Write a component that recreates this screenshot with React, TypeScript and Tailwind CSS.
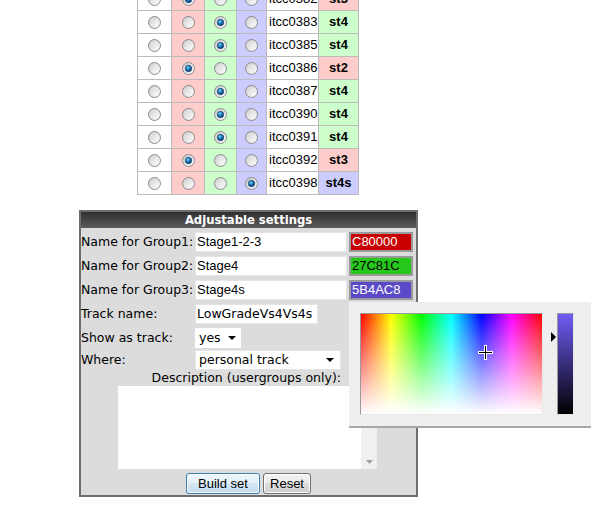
import React from "react";

type Row = [string, number, string];
const rows: Row[] = [
  ["itcc0382", 1, "st3"],
  ["itcc0383", 2, "st4"],
  ["itcc0385", 2, "st4"],
  ["itcc0386", 1, "st2"],
  ["itcc0387", 2, "st4"],
  ["itcc0390", 2, "st4"],
  ["itcc0391", 2, "st4"],
  ["itcc0392", 1, "st3"],
  ["itcc0398", 3, "st4s"],
];

function Radio({ checked }: { checked: boolean }) {
  return (
    <svg width="13" height="13" viewBox="0 0 13 13">
      <defs>
        <linearGradient id="rbg" x1="0" y1="0" x2="1" y2="1">
          <stop offset="0" stopColor="#c8c8c8" />
          <stop offset="1" stopColor="#ffffff" />
        </linearGradient>
        <linearGradient id="rin" x1="0" y1="0" x2="1" y2="1">
          <stop offset="0" stopColor="#d6d6d6" />
          <stop offset="1" stopColor="#fafafa" />
        </linearGradient>
        <radialGradient id="rdot" cx="0.4" cy="0.35" r="0.7">
          <stop offset="0" stopColor="#7fd4ff" />
          <stop offset="0.45" stopColor="#1f7fc4" />
          <stop offset="1" stopColor="#0a2f5a" />
        </radialGradient>
      </defs>
      <circle cx="6.5" cy="6.5" r="6" fill="url(#rbg)" stroke="#8c8c8c" strokeWidth="1" />
      <circle cx="6.5" cy="6.5" r="4" fill="url(#rin)" />
      {checked && <circle cx="6.5" cy="6.5" r="3.2" fill="url(#rdot)" stroke="#0b3358" strokeWidth="0.6" />}
    </svg>
  );
}

function Arrow() {
  return (
    <svg width="8" height="4" viewBox="0 0 8 4">
      <polygon points="0,0 8,0 4,4" fill="#000" />
    </svg>
  );
}

const statusBg = (s: string) =>
  s === "st4" ? "bg-[#ccffcc]" : s === "st4s" ? "bg-[#ccccff]" : "bg-[#ffcccc]";

export default function App() {
  const verd = { fontFamily: '"DejaVu Sans", Verdana, sans-serif' };
  const arial = { fontFamily: '"Liberation Sans", Arial, sans-serif' };
  return (
    <div className="relative w-[611px] h-[507px] overflow-hidden bg-white" style={arial}>
      {/* Table */}
      <div className="grid grid-cols-[33px_32px_31px_29px_51px_39px] auto-rows-[22px] gap-px bg-[#bbbbbb] p-px w-fit ml-[137px] mt-[-13px] text-[13px] text-black">
        {rows.map(([name, sel, st]) => (
          <React.Fragment key={name}>
            <div className="bg-white flex items-center justify-center"><Radio checked={sel === 0} /></div>
            <div className="bg-[#ffcccc] flex items-center justify-center"><Radio checked={sel === 1} /></div>
            <div className="bg-[#ccffcc] flex items-center justify-center"><Radio checked={sel === 2} /></div>
            <div className="bg-[#ccccff] flex items-center justify-center"><Radio checked={sel === 3} /></div>
            <div className="bg-white flex items-center pl-[2px]">{name}</div>
            <div className={`${statusBg(st)} flex items-center justify-center font-bold`}>{st}</div>
          </React.Fragment>
        ))}
      </div>

      {/* Panel */}
      <div className="ml-[79px] mt-[15px] w-[339px] border-2 border-[#6e6e6e] bg-[#dcdcdc] text-[12.5px] text-black flex flex-col" style={verd}>
        <div className="h-[16px] bg-[linear-gradient(to_bottom,#2f2f2f,#5c5c5c)] text-white font-bold text-center leading-[16px] text-[11.6px]">
          Adjustable settings
        </div>
        <div className="flex flex-col mt-[4px] gap-[4px]">
          {[
            ["Name for Group1:", "Stage1-2-3", "C80000", "bg-[#c80000] text-white"],
            ["Name for Group2:", "Stage4", "27C81C", "bg-[#27c81c] text-black"],
            ["Name for Group3:", "Stage4s", "5B4AC8", "bg-[#5b4ac8] text-white"],
          ].map(([l, v, c, cls]) => (
            <div key={l} className="flex items-center h-[20px]">
              <div className="w-[114px] whitespace-nowrap">{l}</div>
              <div className="w-[152px] h-[20px] bg-white border border-[#e4e4e4] flex items-center pl-[1px] text-[13px]" style={arial}>{v}</div>
              <div className={`ml-[2px] w-[64px] h-[20px] border-2 border-[#9a9a9a] flex items-center pl-[1px] text-[13px] ${cls}`} style={arial}>{c}</div>
            </div>
          ))}
          <div className="flex items-center h-[20px]">
            <div className="w-[114px]">Track name:</div>
            <div className="w-[123px] h-[20px] bg-white border border-[#e4e4e4] flex items-center pl-[1px]">LowGradeVs4Vs4s</div>
          </div>
          <div className="flex items-center h-[20px]">
            <div className="w-[114px]">Show as track:</div>
            <div className="w-[46px] h-[20px] bg-white flex items-center justify-between pl-[4px] pr-[5px]">
              <span>yes</span>
              <Arrow />
            </div>
          </div>
        </div>
        <div className="flex items-center h-[20px] mt-[2px]">
          <div className="w-[114px]">Where:</div>
          <div className="w-[146px] h-[20px] bg-white border border-[#e4e4e4] flex items-center justify-between pl-[3px] pr-[6px]">
            <span>personal track</span>
            <Arrow />
          </div>
        </div>
        <div className="h-[16px] w-[260px] text-right leading-[16px] whitespace-nowrap">Description (usergroups only):</div>
        <div className="ml-[37px] w-[259px] h-[83px] bg-white flex justify-end">
          <div className="w-[16px] h-full bg-[#f0f0f0] flex flex-col justify-end items-center pb-[5px]">
            <svg width="7" height="4" viewBox="0 0 7 4"><polygon points="0,0 7,0 3.5,4" fill="#a0a0a0" /></svg>
          </div>
        </div>
        <div className="flex justify-center gap-[3px] mt-[4px] mb-[1px]" style={arial}>
          <div className="w-[74px] h-[21px] rounded-[3px] border border-[#3c7fb1] bg-[linear-gradient(to_bottom,#eef6fb_0%,#e3f0f8_50%,#d3e7f4_50%,#c4dcee_100%)] shadow-[inset_0_0_0_1px_#fff] flex items-center justify-center text-[13px]">
            Build set
          </div>
          <div className="w-[48px] h-[21px] rounded-[3px] border border-[#707070] bg-[linear-gradient(to_bottom,#f2f2f2_0%,#ebebeb_50%,#dddddd_50%,#cfcfcf_100%)] shadow-[inset_0_0_0_1px_#fff] flex items-center justify-center text-[13px]">
            Reset
          </div>
        </div>
      </div>

      {/* Color picker popup */}
      <div className="absolute left-[349px] top-[302px] w-[242px] h-[126px] bg-[#efefef] border-b-2 border-[#a8a8a8]">
        <div className="absolute left-[11px] top-[11px] w-[183px] h-[102px] border border-t-[#9a9a9a] border-l-[#9a9a9a] border-r-[#e8e8e8] border-b-[#e8e8e8] bg-[linear-gradient(to_bottom,rgba(255,255,255,0),#ffffff),linear-gradient(to_right,#ff0000,#ffff00,#00ff00,#00ffff,#0000ff,#ff00ff,#ff0000)]">
          <div className="absolute left-[117px] top-[31px] w-[15px] h-[15px]">
            <div className="absolute left-[6px] top-0 w-[3px] h-[15px] bg-white" />
            <div className="absolute left-0 top-[6px] w-[15px] h-[3px] bg-white" />
            <div className="absolute left-[7px] top-[1px] w-[1px] h-[13px] bg-black" />
            <div className="absolute left-[1px] top-[7px] w-[13px] h-[1px] bg-black" />
          </div>
        </div>
        <svg className="absolute left-[202px] top-[30px]" width="5" height="10" viewBox="0 0 5 10">
          <polygon points="0,0 5,5 0,10" fill="#000" />
        </svg>
        <div className="absolute left-[208px] top-[11px] w-[17px] h-[102px] border border-t-[#9a9a9a] border-l-[#9a9a9a] border-r-[#e8e8e8] border-b-[#e8e8e8] bg-[linear-gradient(to_bottom,#6f5cf5,#000000)]" />
      </div>
    </div>
  );
}
